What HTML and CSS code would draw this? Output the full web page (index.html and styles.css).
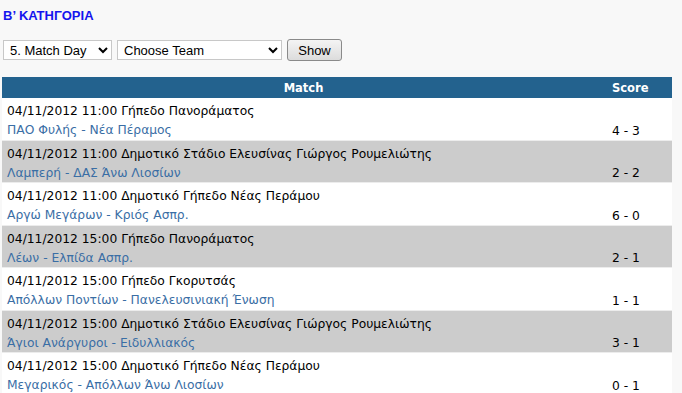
FILE: index.html
```html
<!DOCTYPE html>
<html>
<head>
<meta charset="utf-8">
<link rel="stylesheet" href="styles.css">
</head>
<body>
<div class="page">
  <h1 class="title">Β’ ΚΑΤΗΓΟΡΙΑ</h1>
  <form class="filters">
    <select class="sel sel-day"><option>5. Match Day</option></select>
    <select class="sel sel-team"><option>Choose Team</option></select>
    <button type="button" class="btn">Show</button>
  </form>
  <div class="games">
    <div class="row head"><div class="c-match">Match</div><div class="c-score">Score</div></div>
    <div class="row"><div class="c-match"><div class="info">04/11/2012 11:00 Γήπεδο Πανοράματος</div><div class="teams">ΠΑΟ Φυλής - Νέα Πέραμος</div></div><div class="c-score">4 - 3</div></div>
    <div class="row alt"><div class="c-match"><div class="info">04/11/2012 11:00 Δημοτικό Στάδιο Ελευσίνας Γιώργος Ρουμελιώτης</div><div class="teams">Λαμπερή - ΔΑΣ Άνω Λιοσίων</div></div><div class="c-score">2 - 2</div></div>
    <div class="row"><div class="c-match"><div class="info">04/11/2012 11:00 Δημοτικό Γήπεδο Νέας Περάμου</div><div class="teams">Αργώ Μεγάρων - Κριός Ασπρ.</div></div><div class="c-score">6 - 0</div></div>
    <div class="row alt"><div class="c-match"><div class="info">04/11/2012 15:00 Γήπεδο Πανοράματος</div><div class="teams">Λέων - Ελπίδα Ασπρ.</div></div><div class="c-score">2 - 1</div></div>
    <div class="row"><div class="c-match"><div class="info">04/11/2012 15:00 Γήπεδο Γκορυτσάς</div><div class="teams">Απόλλων Ποντίων - Πανελευσινιακή Ένωση</div></div><div class="c-score">1 - 1</div></div>
    <div class="row alt"><div class="c-match"><div class="info">04/11/2012 15:00 Δημοτικό Στάδιο Ελευσίνας Γιώργος Ρουμελιώτης</div><div class="teams">Άγιοι Ανάργυροι - Ειδυλλιακός</div></div><div class="c-score">3 - 1</div></div>
    <div class="row"><div class="c-match"><div class="info">04/11/2012 15:00 Δημοτικό Γήπεδο Νέας Περάμου</div><div class="teams">Μεγαρικός - Απόλλων Άνω Λιοσίων</div></div><div class="c-score">0 - 1</div></div>
  </div>
</div>
</body>
</html>
```
FILE: styles.css
```css
html, body {
  margin: 0;
  padding: 0;
  background: #f8f8f8;
}
.page {
  padding: 9px 10px 0 2px;
  font-family: "DejaVu Sans", Verdana, sans-serif;
}
.title {
  margin: 0 0 0 1px;
  font-family: "Liberation Sans", Arial, sans-serif;
  font-size: 13px;
  font-weight: bold;
  color: #1414ee;
  line-height: 14px;
}
.filters {
  display: flex;
  align-items: center;
  gap: 5px;
  margin: 16px 0 0 1px;
  height: 22px;
}
.sel {
  height: 20px;
  font-family: "Liberation Sans", Arial, sans-serif;
  font-size: 13px;
  border: 1px solid #c8c8c8;
  background: #fff;
  color: #000;
  padding: 0 0 0 2px;
}
.sel-day { width: 109px; }
.sel-team { width: 165px; }
.btn {
  height: 22px;
  width: 55px;
  font-family: "Liberation Sans", Arial, sans-serif;
  font-size: 13px;
  border: 1px solid #8a8a8a;
  border-radius: 3px;
  background: linear-gradient(#f4f4f4, #dcdcdc);
  color: #000;
  padding: 0;
}
.games {
  margin-top: 16px;
  width: 670px;
  font-size: 12.3px;
}
.row {
  display: flex;
  height: 41.5px;
  border-bottom: 1px solid #ececec;
  background: #fff;
}
.row.alt { background: #cccccc; }
.row.head {
  height: 21px;
  border-bottom: 0;
  background: #23628e;
  color: #fff;
  font-weight: bold;
  font-size: 11.5px;
  align-items: center;
}
.c-match {
  flex: 1;
  padding: 4px 0 0 5px;
}
.head .c-match {
  text-align: center;
  padding: 0;
}
.c-score {
  width: 60px;
  padding-left: 7px;
  align-self: flex-end;
  padding-bottom: 2px;
  line-height: 14px;
  color: #000;
}
.head .c-score {
  align-self: center;
  padding-bottom: 0;
  color: #fff;
}
.info {
  color: #000;
  line-height: 19px;
}
.teams {
  color: #3a6ea5;
  line-height: 19px;
}
```
